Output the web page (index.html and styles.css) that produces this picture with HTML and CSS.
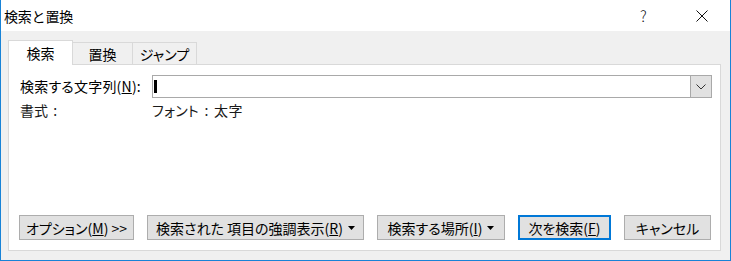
FILE: index.html
```html
<!DOCTYPE html>
<html lang="ja">
<head>
    <meta charset="UTF-8">
    <title>検索と置換</title>
    <link rel="stylesheet" href="styles.css">
</head>
<body>
    <div class="window">
        <div class="titlebar">
            <span class="title">検索と置換</span>
            <span class="help">?</span>
            <span class="close">
                <svg width="12" height="12" viewBox="0 0 12 12">
                    <path d="M0.5 0.5 L11.5 11.5 M11.5 0.5 L0.5 11.5" stroke="#111" stroke-width="1" fill="none"/>
                </svg>
            </span>
        </div>

        <div class="dialog-body">
            <div class="tabs">
                <div class="tab active">検索</div>
                <div class="tab tab-replace">置換</div>
                <div class="tab tab-jump">ジャンプ</div>
            </div>

            <div class="panel">
                <div class="fields">
                    <label class="field-label">検索する文字列(<u>N</u>):</label>
                    <div class="combo">
                        <div class="combo-input"><span class="caret"></span></div>
                        <div class="combo-button">
                            <svg width="10" height="6" viewBox="0 0 10 6">
                                <polyline points="0.5,0.5 5,5 9.5,0.5" stroke="#333" stroke-width="1" fill="none"/>
                            </svg>
                        </div>
                    </div>
                    <span class="format-label">書式 :</span>
                    <span class="format-value">フォント : 太字</span>
                </div>

                <div class="buttons">
                    <button class="btn btn-options">オプション(<u>M</u>) &gt;&gt;</button>
                    <button class="btn btn-highlight">検索された 項目の強調表示(<u>R</u>)<svg class="drop" width="7" height="4" viewBox="0 0 7 4"><polygon points="0,0 7,0 3.5,4" fill="#000"/></svg></button>
                    <button class="btn btn-where">検索する場所(<u>I</u>)<svg class="drop" width="7" height="4" viewBox="0 0 7 4"><polygon points="0,0 7,0 3.5,4" fill="#000"/></svg></button>
                    <button class="btn btn-default btn-next">次を検索(<u>F</u>)</button>
                    <button class="btn btn-cancel">キャンセル</button>
                </div>
            </div>
        </div>
    </div>
</body>
</html>
```

FILE: styles.css
```css
/* Base */
body {
    margin: 0;
    font-family: "Noto Sans CJK JP", "Noto Sans", sans-serif;
    font-size: 14px;
    color: #000;
    font-feature-settings: "palt";
}

.window {
    width: 731px;
    height: 261px;
    box-sizing: border-box;
    border: 1px solid #1883d7;
    border-top: none;
    display: flex;
    flex-direction: column;
}

/* Title bar */
.titlebar {
    height: 31px;
    background: #fff;
    display: flex;
    align-items: center;
    padding-left: 3px;
}

.title {
    flex: 1;
    font-size: 14px;
    font-feature-settings: normal;
    letter-spacing: -0.2px;
    padding-top: 1px;
}

.help {
    width: 16px;
    font-size: 15px;
    font-weight: 300;
    color: #111;
    margin-right: 40px;
}

.close {
    width: 12px;
    height: 12px;
    margin-right: 22px;
    display: flex;
}

/* Dialog body */
.dialog-body {
    flex: 1;
    background: #f0f0f0;
    padding: 9px 9px 9px 7px;
    display: flex;
    flex-direction: column;
}

.tabs {
    display: flex;
    align-items: flex-end;
    height: 24px;
}

.tab {
    box-sizing: border-box;
    height: 22px;
    border: 1px solid #d9d9d9;
    border-left: none;
    border-bottom: none;
    display: flex;
    align-items: center;
    justify-content: center;
    line-height: 1;
    padding-top: 1px;
}

.tab.active {
    height: 25px;
    width: 65px;
    border-left: 1px solid #d9d9d9;
    background: #fff;
    margin-bottom: -1px;
    position: relative;
    z-index: 1;
    padding-top: 0;
}

.tab-replace {
    width: 60px;
}

.tab-jump {
    width: 64px;
}

.panel {
    flex: 1;
    background: #fff;
    border: 1px solid #d9d9d9;
    padding: 10px 8px 10px 11px;
    display: flex;
    flex-direction: column;
}

/* Fields */
.fields {
    display: grid;
    grid-template-columns: 132px 1fr;
    row-gap: 3px;
    align-items: center;
}

.field-label {
    line-height: 23px;
    letter-spacing: 0.2px;
}

.combo {
    height: 23px;
    box-sizing: border-box;
    border: 1px solid #a9a9a9;
    display: flex;
}

.combo-input {
    flex: 1;
    background: #fff;
    display: flex;
    align-items: center;
    padding-left: 1px;
}

.caret {
    width: 3px;
    height: 13px;
    background: #000;
}

.combo-button {
    width: 20px;
    background: #e1e1e1;
    border-left: 1px solid #a9a9a9;
    display: flex;
    align-items: center;
    justify-content: center;
}

.format-label,
.format-value {
    line-height: 19px;
    color: #1a1a1a;
    word-spacing: 2px;
}

.format-value {
    letter-spacing: 0.3px;
}

/* Buttons */
.buttons {
    margin-top: auto;
    margin-left: -1px;
    display: flex;
    gap: 13px;
}

.btn {
    height: 25px;
    box-sizing: border-box;
    border: 1px solid #adadad;
    background: #e1e1e1;
    font-family: inherit;
    font-size: 14px;
    font-feature-settings: "palt";
    color: #000;
    padding: 0;
    display: flex;
    align-items: center;
    justify-content: center;
    line-height: 1;
}

.btn .drop {
    margin-left: 5px;
}

.btn-default {
    border: 2px solid #0078d7;
}

.btn-options { width: 115px; }
.btn-highlight { width: 217px; }
.btn-where { width: 128px; }
.btn-next { width: 93px; }
.btn-cancel { width: 87px; }
```
